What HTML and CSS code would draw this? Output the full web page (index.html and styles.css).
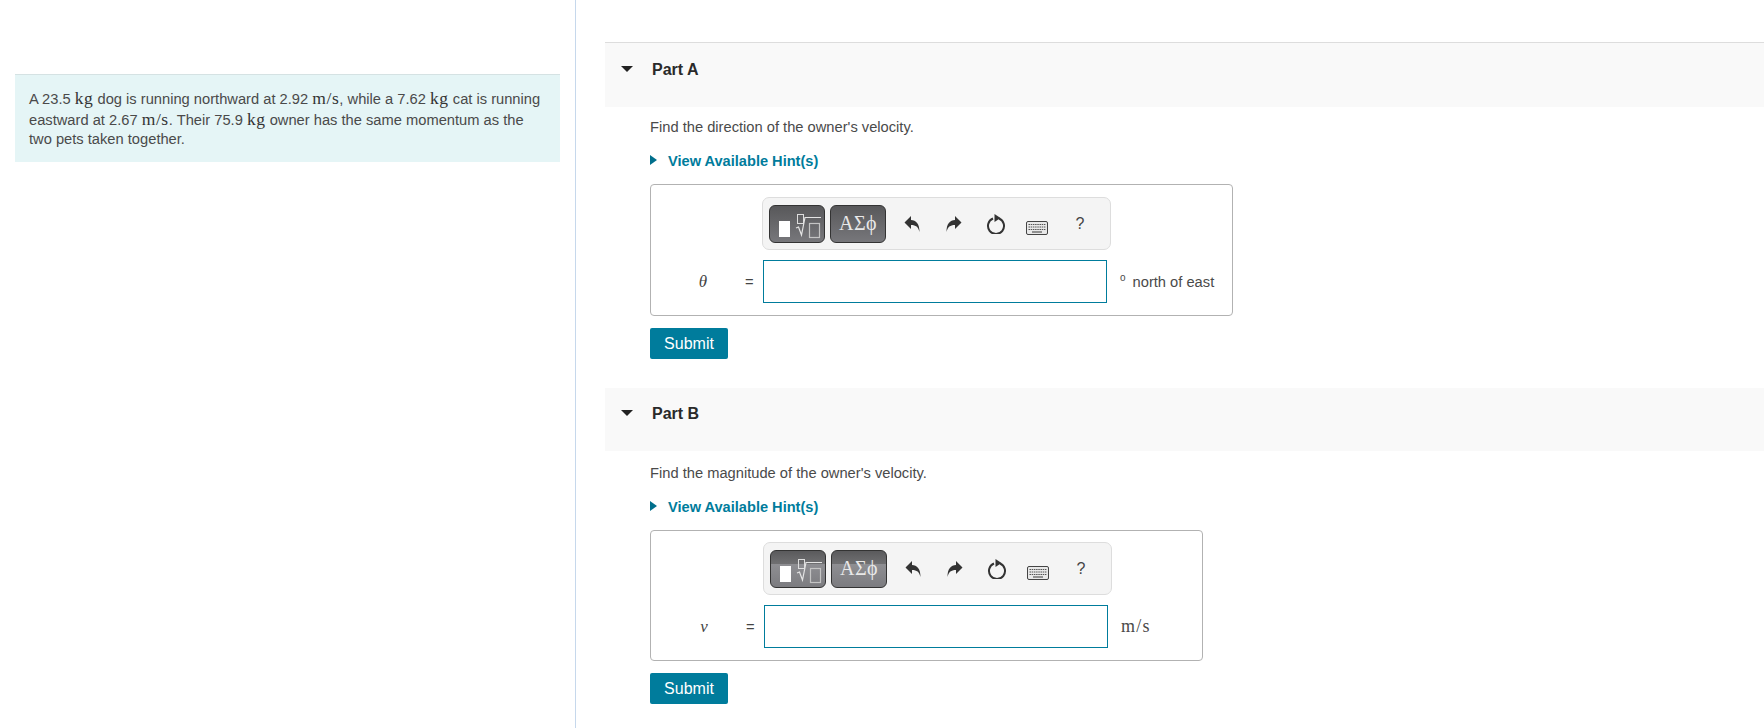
FILE: index.html
```html
<!DOCTYPE html>
<html lang="en">
<head>
<meta charset="utf-8">
<title>Momentum problem</title>
<link rel="stylesheet" href="styles.css">
</head>
<body>
<svg class="defs" aria-hidden="true">
  <symbol id="i-templates" viewBox="1 1 54 36">
    <rect x="10" y="16" width="11" height="16" fill="#fff"/>
    <rect x="28.500" y="9.500" width="6" height="9" fill="none" stroke="#ddd"/>
    <path d="M27 23l2.500-1 3 8 3.500-17.500h16" fill="none" stroke="#e4e4e4" stroke-width="1.200"/>
    <rect x="40.500" y="18.500" width="10" height="14" fill="none" stroke="#c4c4c4" stroke-width="1.200"/>
  </symbol>
  <symbol id="i-undo" viewBox="0 0 16 18">
    <path d="M.5 7.500 7 1v4c5 .2 8.500 3.500 8.500 12-1.300-5-3.500-6.800-8.500-6.900V14z" fill="#333"/>
  </symbol>
  <symbol id="i-redo" viewBox="0 0 16 18">
    <path d="M15.500 7.500 9 1v4C4 5.200.5 8.500.5 17c1.300-5 3.500-6.800 8.500-6.900V14z" fill="#333"/>
  </symbol>
  <symbol id="i-reset" viewBox="0 0 20 20">
    <path d="M13 4.500a8 8 0 1 1-6 0" fill="none" stroke="#333" stroke-width="2"/>
    <path d="M8.500 0l6 4-6 4z" fill="#333"/>
  </symbol>
  <symbol id="i-keys" viewBox="0 0 22 14">
    <rect x=".5" y=".5" width="21" height="13" rx="1.500" fill="#e8e8e8" stroke="#444"/>
    <path d="M2.500 3.500h17M2.500 6h17M2.500 8.500h17" stroke="#555" stroke-dasharray="1.500 .7"/>
    <path d="M6 11h10" stroke="#555" stroke-width="1.200"/>
  </symbol>
</svg>
<div class="page">
  <aside class="left">
    <div class="problem">
      A 23.5 <span class="unit">kg</span> dog is running northward at 2.92 <span class="unit">m/s</span>, while a 7.62 <span class="unit">kg</span> cat is running eastward at 2.67 <span class="unit">m/s</span>. Their 75.9 <span class="unit">kg</span> owner has the same momentum as the two pets taken together.
    </div>
  </aside>
  <main class="right">
    <section class="part part-a">
      <header class="part-head"><span class="caret"></span><h2>Part A</h2></header>
      <div class="part-body">
        <p class="prompt">Find the direction of the owner's velocity.</p>
        <a class="hint"><span class="hint-arrow"></span>View Available Hint(s)</a>
        <div class="answer answer-a">
          <div class="toolbar">
            <span class="tbtn"><svg class="tmpl"><use href="#i-templates"/></svg></span>
            <span class="tbtn greek">ΑΣϕ</span>
            <span class="tool"><svg class="ic16"><use href="#i-undo"/></svg></span>
            <span class="tool"><svg class="ic16"><use href="#i-redo"/></svg></span>
            <span class="tool"><svg class="ic20"><use href="#i-reset"/></svg></span>
            <span class="tool"><svg class="ic-keys"><use href="#i-keys"/></svg></span>
            <span class="tool help">?</span>
          </div>
          <div class="row">
            <span class="var">θ</span>
            <span class="eq">=</span>
            <span class="field"></span>
            <span class="suffix"><sup class="deg">o</sup>north of east</span>
          </div>
        </div>
        <button class="submit" type="button">Submit</button>
      </div>
    </section>
    <section class="part part-b">
      <header class="part-head"><span class="caret"></span><h2>Part B</h2></header>
      <div class="part-body">
        <p class="prompt">Find the magnitude of the owner's velocity.</p>
        <a class="hint"><span class="hint-arrow"></span>View Available Hint(s)</a>
        <div class="answer answer-b">
          <div class="toolbar">
            <span class="tbtn"><svg class="tmpl"><use href="#i-templates"/></svg></span>
            <span class="tbtn greek">ΑΣϕ</span>
            <span class="tool"><svg class="ic16"><use href="#i-undo"/></svg></span>
            <span class="tool"><svg class="ic16"><use href="#i-redo"/></svg></span>
            <span class="tool"><svg class="ic20"><use href="#i-reset"/></svg></span>
            <span class="tool"><svg class="ic-keys"><use href="#i-keys"/></svg></span>
            <span class="tool help">?</span>
          </div>
          <div class="row">
            <span class="var var-v">v</span>
            <span class="eq">=</span>
            <span class="field"></span>
            <span class="suffix unit">m/s</span>
          </div>
        </div>
        <button class="submit" type="button">Submit</button>
      </div>
    </section>
  </main>
</div>
</body>
</html>
```
FILE: styles.css
```css
* { box-sizing: border-box; }
html, body { margin: 0; height: 100%; overflow: hidden; background: #fff; }
body { font-family: "Liberation Sans", Arial, sans-serif; font-size: 14.7px; color: #4a4a4a; }
.defs { display: none; }
.page { display: flex; height: 728px; }
.left { width: 576px; flex: none; padding: 74px 15px 0 15px; border-right: 1px solid #c6d8ec; }
.problem { width: 545px; height: 88px; padding: 14px 15px 0 14px; background: #e5f5f6; border-top: 1px solid #d5e2e3; line-height: 19.6px; }
.unit { font-family: "Liberation Serif", serif; font-size: 17.500px; letter-spacing: .6px; color: #333; }
.right { flex: 1; min-width: 0; padding: 42px 0 0 29px; }
.part-head { display: flex; align-items: flex-start; background: #f9f9f9; padding-left: 16px; }
.part-a .part-head { border-top: 1px solid #ddd; height: 65px; padding-top: 16px; }
.part-b { margin-top: 29px; }
.part-b .part-head { height: 63px; padding-top: 15px; }
.caret { width: 0; height: 0; margin-top: 7px; border-left: 6px solid transparent; border-right: 6px solid transparent; border-top: 6px solid #222; }
.part-head h2 { margin: 0 0 0 19px; font-size: 16px; line-height: 22px; font-weight: bold; color: #2a2a2a; }
.part-body { padding: 11px 0 0 45px; }
.part-b .part-body { padding-top: 13px; }
.prompt { margin: 0; font-size: 14.7px; line-height: 18px; color: #4a4a4a; }
.hint { display: flex; align-items: center; margin-top: 16px; height: 18px; font-weight: bold; font-size: 14.6px; color: #007c9c; }
.hint-arrow { width: 0; height: 0; margin: -2px 11px 0 0; border-top: 5.500px solid transparent; border-bottom: 5.500px solid transparent; border-left: 7px solid #006f8c; }
.answer { margin-top: 14px; border: 1px solid #b2b2b2; border-radius: 4px; padding: 12px 0 0 111px; }
.answer-a { width: 583px; height: 132px; }
.answer-b { width: 553px; height: 131px; padding: 11px 0 0 112px; }
.toolbar { display: flex; align-items: center; width: 349px; height: 53px; padding-left: 6px; background: #f4f4f4; border: 1px solid #ddd; border-radius: 7px; }
.tbtn { display: flex; flex: none; align-items: center; justify-content: center; width: 56px; height: 38px; margin-right: 5px; background: linear-gradient(#58585a, #77777b); border: 1px solid #333; border-radius: 6px; color: #e8e8e8; }
.answer-b .tbtn { background: linear-gradient(#5a5a5c 0, #707072 36%, #8e8e92 37%, #7c7c80 100%); }
.tmpl { width: 54px; height: 36px; display: block; }
.greek { font-family: "Liberation Serif", serif; font-size: 20px; letter-spacing: .4px; }
.tool { display: flex; flex: none; align-items: center; justify-content: center; width: 42px; height: 37px; color: #444; }
.ic16 { width: 16px; height: 18px; }
.ic20 { width: 20px; height: 20px; }
.ic-keys { width: 22px; height: 14px; margin: 8px 2px 0 0; }
.help { font-size: 16px; }
.row { position: relative; display: flex; align-items: center; height: 43px; margin-top: 10px; }
.var { position: absolute; left: -69px; width: 20px; text-align: center; font-family: "Liberation Serif", serif; font-style: italic; font-size: 17px; color: #444; }
.eq { position: absolute; left: -17px; font-size: 14.7px; color: #444; }
.field { width: 344px; height: 43px; margin-left: 1px; border: 1px solid #007c9c; background: #fff; }
.suffix { margin-left: 13px; font-size: 14.7px; color: #4a4a4a; white-space: nowrap; }
.suffix.unit { font-size: 18px; letter-spacing: 1.300px; }
.deg { font-size: 10px; line-height: 0; vertical-align: 6px; margin-right: 7px; }
.submit { display: block; margin-top: 12px; width: 78px; height: 31px; padding: 0; border: 0; border-radius: 2px; background: #007c9c; color: #fff; font: 16px/31px "Liberation Sans", Arial, sans-serif; }
```
